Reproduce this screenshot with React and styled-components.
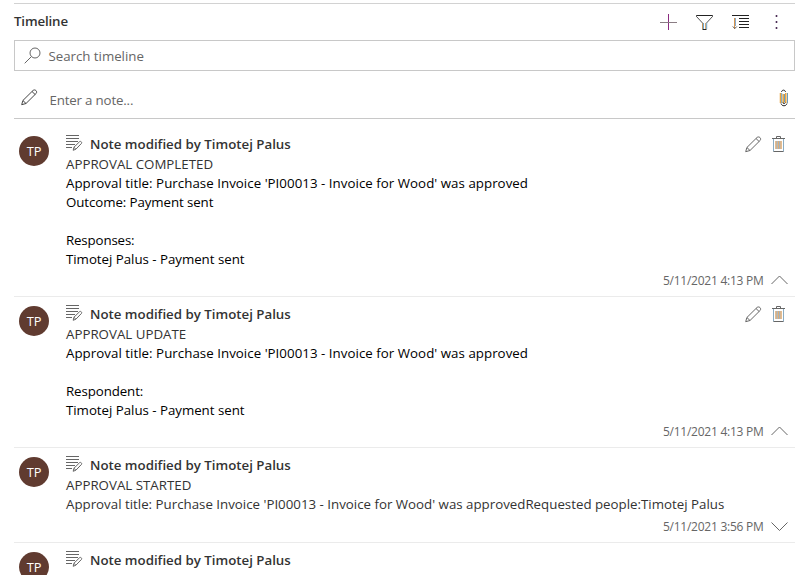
import React from "react";
import styled, { createGlobalStyle } from "styled-components";

const GlobalStyle = createGlobalStyle`
  * { box-sizing: border-box; }
  body {
    margin: 0;
    height: 575px;
    overflow: hidden;
    background: #fff;
    color: #333;
    font-family: "Open Sans", "Noto Sans", sans-serif;
    font-size: 13.3px;
  }
`;

const Panel = styled.main`
  width: 781px;
  margin: 3px 0 0 14px;
  border-top: 1px solid #d2d2d2;
`;

const Header = styled.header`
  display: flex;
  align-items: center;
  justify-content: space-between;
  height: 36px;
`;

const Heading = styled.h1`
  margin: -2px 0 0;
  font-size: 13.3px;
  font-weight: 600;
  line-height: 20px;
  letter-spacing: -0.15px;
`;

const Commands = styled.div`
  display: flex;
  gap: 19px;
  padding-right: 10px;
`;

const Glyph = styled.svg`
  display: block;
  flex: none;
  fill: none;
  stroke: ${(p) => p.$color || "#666"};
  stroke-width: 1;
`;

const SearchBox = styled.div`
  display: flex;
  align-items: center;
  gap: 7.5px;
  height: 31px;
  padding-left: 9px;
  border: 1px solid #c8c8c8;
  color: #666;
`;

const NoteEntry = styled.div`
  display: flex;
  align-items: center;
  height: 48px;
  padding: 10px 6px 0 7px;
  border-bottom: 1px solid #c8c8c8;
  color: #666;
`;

const Prompt = styled.span`
  flex: 1;
  line-height: 20px;
  letter-spacing: ${(p) => p.$spacing || "0"};
`;

const NotePencil = styled.span`
  margin: -4px 11.5px 0 0;
`;

const Clip = styled.span`
  margin-top: -3px;
`;

const Feed = styled.section`
  padding-top: 8px;
`;

const Entry = styled.article`
  display: grid;
  grid-template-columns: 52px 1fr;
  padding: 7px 7px 5px 0;
  border-bottom: 1px solid #ebebeb;
`;

const Avatar = styled.div`
  width: 30px;
  height: 30px;
  margin: 2px 0 0 5px;
  border-radius: 50%;
  background: #603b30;
  color: #fff;
  font-size: 12.8px;
  font-weight: 500;
  line-height: 31px;
  text-align: center;
`;

const EntryHead = styled.div`
  display: flex;
  align-items: center;
  height: 20px;
`;

const NoteKind = styled.span`
  width: 24px;
  margin-top: -3px;
`;

const EntryTitle = styled.h2`
  flex: 1;
  margin: 0;
  font-size: 13.3px;
  font-weight: 600;
  line-height: 20px;
  letter-spacing: -0.01px;
  white-space: nowrap;
`;

const Actions = styled.div`
  display: flex;
  gap: 10px;
  margin: 1px 3px 0 0;
`;

const Body = styled.div`
  padding-bottom: ${(p) => (p.$collapsed ? "1px" : "0")};
`;

const Line = styled.p`
  height: 19px;
  margin: 0;
  color: ${(p) => (p.$strong ? "#000" : "#333")};
  line-height: 20px;
  letter-spacing: ${(p) => p.$spacing || "0"};
  white-space: nowrap;
`;

const Footer = styled.div`
  display: flex;
  align-items: center;
  justify-content: flex-end;
  gap: 7.5px;
  height: 21px;
  margin-top: 2px;
  color: #666;
`;

const Stamp = styled.time`
  font-size: 12px;
  letter-spacing: -0.25px;
  line-height: 20px;
`;

const Plus = () => (
  <Glyph $color="#8b2a80" width="17" height="17" viewBox="0 0 17 17">
    <path d="M8.5 0v16" />
    <path stroke="#8a7d84" d="M0 8.500h17" />
  </Glyph>
);

const Filter = () => (
  <Glyph $color="#222" width="17" height="17" viewBox="0 0 17 17">
    <path stroke="#555" d="M.5 2.500L6.500 9M16.500 2.500L10.500 9" />
    <path stroke="#c59258" d="M6.500 9v6M9.700 9v6" />
    <path stroke="#6ba5cd" d="M7.500 9v6M10.700 9v6" />
    <path d="M.5 1.500h16M.5 1.500v1M16.500 1.500v1M6.500 15.500h4" />
  </Glyph>
);

const Sort = () => (
  <Glyph $color="#222" width="17" height="17" viewBox="0 0 17 17">
    <path d="M0 1.500h17M7 4.500h10M7 7.500h10M7 10.500h10M7 13.500h10" />
    <path stroke="#d9954d" d="M2.500 4v11" />
    <path stroke="#87aacb" d="M3.500 4v8" />
    <path stroke="#555" d="M.8 12.500l2 2 2-2" />
  </Glyph>
);

const More = () => (
  <Glyph $color="none" width="17" height="17" viewBox="0 0 17 17">
    <path fill="#4b2d55" d="M7.700 1h1.600v2h-1.600zM7.700 7h1.600v2h-1.600zM7.700 13h1.600v2h-1.600z" />
  </Glyph>
);

const Search = () => (
  <Glyph width="17" height="17" viewBox="0 0 17 17">
    <circle cx="11" cy="6" r="5" />
    <path d="M7.500 9.500L.7 16.300" />
  </Glyph>
);

const Pencil = ({ color }) => (
  <Glyph $color={color} width="17" height="17" viewBox="0 0 17 17">
    <path d="M.7 15.700l1.200-4.200L12 1.500c2-1.700 4.700.8 3.200 2.900L5 14.500zM1.900 11.500L5 14.500M11 2.500l3.100 3" />
  </Glyph>
);

const Paperclip = () => (
  <Glyph width="10" height="18" viewBox="0 0 10 18">
    <path stroke="#eba43d" strokeWidth="1.500" d="M1.500 4v10M4.200 5v9M6.800 4v10" />
    <path stroke="#6d9dbd" d="M2.700 4v10M8.500 4v10M5.500 5v8" />
    <path stroke="#222" d="M2.500 3C3 .5 6 .5 6.500 3M2 14.500c.8 3 5.200 3 6 0M4 13.500c0 1.500 2 1.500 2 0" />
  </Glyph>
);

const Trash = () => (
  <Glyph width="13" height="17" viewBox="0 0 13 17">
    <path stroke="#8badc4" d="M1.500 3v12.500M11.500 3v12.500" />
    <path stroke="#dfad75" strokeWidth="1.600" d="M4 5v8M6.500 5v8M9 5v8" />
    <path stroke="#7896ab" strokeWidth=".8" d="M5.200 5v8M7.700 5v8" />
    <path d="M0 2.500h13M4.500 2V.5h4V2M1.500 15.500h10" />
  </Glyph>
);

const NoteIcon = () => (
  <Glyph width="17" height="16" viewBox="0 0 17 16">
    <path d="M0 .5h13M0 3.500h13M0 6.500h12M0 9.500h9M0 12.500h6" />
    <path d="M7.200 15.300l.7-3 5.800-5.700c1-.8 2.600.8 1.800 1.800l-5.600 5.800zM7.900 12.300l2 1.900" />
  </Glyph>
);

const Chevron = ({ down }) => (
  <Glyph width="17" height="11" viewBox="0 0 17 11">
    <path d={down ? "M.5 1.500l8 8 8-8" : "M.5 9l8-8 8 8"} />
  </Glyph>
);

const approval = "Approval title: Purchase Invoice 'PI00013 - Invoice for Wood' was approved";

const entries = [
  {
    status: "APPROVAL COMPLETED",
    lines: [
      { text: approval, spacing: "0.035px" },
      { text: "Outcome: Payment sent", spacing: "-0.09px" },
      { text: "" },
      { text: "Responses:", spacing: "-0.15px" },
      { text: "Timotej Palus - Payment sent", spacing: "-0.03px" },
    ],
    time: "5/11/2021 4:13 PM",
    open: true,
  },
  {
    status: "APPROVAL UPDATE",
    lines: [
      { text: approval, spacing: "0.035px" },
      { text: "" },
      { text: "Respondent:", spacing: "-0.1px" },
      { text: "Timotej Palus - Payment sent", spacing: "-0.03px" },
    ],
    time: "5/11/2021 4:13 PM",
    open: true,
  },
  {
    status: "APPROVAL STARTED",
    lines: [{ text: approval + "Requested people:Timotej Palus" }],
    time: "5/11/2021 3:56 PM",
  },
  { lines: [] },
];

function TimelineEntry({ entry }) {
  return (
    <Entry>
      <Avatar>TP</Avatar>
      <div>
        <EntryHead>
          <NoteKind><NoteIcon /></NoteKind>
          <EntryTitle>Note modified by Timotej Palus</EntryTitle>
          {entry.open && <Actions><Pencil /><Trash /></Actions>}
        </EntryHead>
        <Body $collapsed={!entry.open}>
          {entry.status && <Line>{entry.status}</Line>}
          {entry.lines.map((line, i) => (
            <Line key={i} $strong={entry.open} $spacing={line.spacing}>{line.text}</Line>
          ))}
        </Body>
        {entry.time && (
          <Footer>
            <Stamp>{entry.time}</Stamp>
            <Chevron down={!entry.open} />
          </Footer>
        )}
      </div>
    </Entry>
  );
}

export default function App() {
  return (
    <>
      <GlobalStyle />
      <Panel>
        <Header>
          <Heading>Timeline</Heading>
          <Commands><Plus /><Filter /><Sort /><More /></Commands>
        </Header>
        <SearchBox>
          <Search />
          <Prompt $spacing="-0.03px">Search timeline</Prompt>
        </SearchBox>
        <NoteEntry>
          <NotePencil><Pencil color="#444" /></NotePencil>
          <Prompt $spacing="-0.17px">Enter a note...</Prompt>
          <Clip><Paperclip /></Clip>
        </NoteEntry>
        <Feed>
          {entries.map((entry, i) => <TimelineEntry key={i} entry={entry} />)}
        </Feed>
      </Panel>
    </>
  );
}
